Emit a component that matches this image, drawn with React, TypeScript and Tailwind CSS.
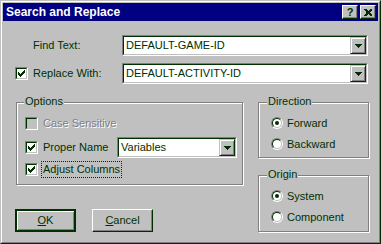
import React from 'react'

const ink = 'text-[#003000]'

const Check = ({ checked = false, disabled = false }: { checked?: boolean; disabled?: boolean }) => (
  <div className="w-[13px] h-[13px] shrink-0 border border-t-[#808080] border-l-[#808080] border-r-white border-b-white">
    <div
      className={`w-full h-full flex items-center justify-center border border-t-[#003000] border-l-[#003000] border-r-[#c0c0c0] border-b-[#c0c0c0] ${
        disabled ? 'bg-[#c0c0c0]' : 'bg-white'
      }`}
    >
      {checked && (
        <svg width="7" height="7" viewBox="0 0 7 7" shapeRendering="crispEdges" fill="#003000">
          <rect x="6" y="0" width="1" height="1" />
          <rect x="5" y="1" width="2" height="1" />
          <rect x="0" y="2" width="1" height="1" />
          <rect x="4" y="2" width="3" height="1" />
          <rect x="0" y="3" width="2" height="1" />
          <rect x="3" y="3" width="3" height="1" />
          <rect x="0" y="4" width="5" height="1" />
          <rect x="1" y="5" width="3" height="1" />
          <rect x="2" y="6" width="1" height="1" />
        </svg>
      )}
    </div>
  </div>
)

const Radio = ({ checked = false }: { checked?: boolean }) => (
  <div className="w-[12px] h-[12px] shrink-0 rounded-full border border-t-[#808080] border-l-[#808080] border-r-white border-b-white">
    <div className="w-full h-full rounded-full bg-white flex items-center justify-center border border-t-[#003000] border-l-[#003000] border-r-[#c0c0c0] border-b-[#c0c0c0]">
      {checked && <div className="w-[4px] h-[4px] rounded-full bg-[#003000]" />}
    </div>
  </div>
)

const Arrow = () => (
  <svg width="7" height="4" viewBox="0 0 7 4" shapeRendering="crispEdges" fill="#003000">
    <rect x="0" y="0" width="7" height="1" />
    <rect x="1" y="1" width="5" height="1" />
    <rect x="2" y="2" width="3" height="1" />
    <rect x="3" y="3" width="1" height="1" />
  </svg>
)

const Combo = ({ value, width }: { value: string; width: string }) => (
  <div className={`${width} h-[21px] shrink-0 border border-t-[#808080] border-l-[#808080] border-r-white border-b-white`}>
    <div className="h-full flex bg-white border border-t-[#003000] border-l-[#003000] border-r-[#c0c0c0] border-b-[#c0c0c0]">
      <div className={`flex-1 pl-[2px] leading-[17px] ${ink}`}>{value}</div>
      <div className="w-[16px] h-full flex items-center justify-center bg-[#c0c0c0] border border-t-[#c0c0c0] border-l-[#c0c0c0] border-r-[#003000] border-b-[#003000] shadow-[inset_1px_1px_white,inset_-1px_-1px_#808080]">
        <Arrow />
      </div>
    </div>
  </div>
)

const Group = ({ label, labelLeft, className, children }: { label: string; labelLeft: string; className: string; children: React.ReactNode }) => (
  <div className={`relative border border-[#808080] shadow-[inset_1px_1px_white,1px_1px_white] ${className}`}>
    <span className={`absolute top-[-8px] ${labelLeft} px-[1px] bg-[#c0c0c0] leading-[13px] ${ink}`}>{label}</span>
    {children}
  </div>
)

const Button = ({ children, isDefault = false }: { children: React.ReactNode; isDefault?: boolean }) => (
  <div
    className={`w-[61px] h-[23px] flex items-center justify-center ${ink} ${
      isDefault
        ? 'border-2 border-[#003000] shadow-[inset_1px_1px_white,inset_-1px_-1px_#808080]'
        : 'border border-t-white border-l-white border-r-[#003000] border-b-[#003000] shadow-[inset_-1px_-1px_#808080]'
    }`}
  >
    {children}
  </div>
)

export default function App() {
  return (
    <div className="w-[381px] h-[244px] bg-[#c0c0c0] text-[11px] font-['Liberation_Sans',Arial,sans-serif] border border-t-[#c0c0c0] border-l-[#c0c0c0] border-r-[#003000] border-b-[#003000]">
      <div className="h-full flex flex-col p-[1px] border border-t-white border-l-white border-r-[#808080] border-b-[#808080]">
        {/* title bar */}
        <div className="h-[18px] shrink-0 bg-[#000080] flex items-center pl-[3px] pr-[2px]">
          <span className="flex-1 text-white font-bold text-[12px] leading-none">Search and Replace</span>
          <div className="flex gap-[2px]">
            <div className="w-[16px] h-[14px] bg-[#c0c0c0] flex items-center justify-center border border-t-white border-l-white border-r-[#003000] border-b-[#003000] shadow-[inset_-1px_-1px_#808080]">
              <span className={`font-bold text-[11px] leading-none ${ink}`}>?</span>
            </div>
            <div className="w-[16px] h-[14px] bg-[#c0c0c0] flex items-center justify-center border border-t-white border-l-white border-r-[#003000] border-b-[#003000] shadow-[inset_-1px_-1px_#808080]">
              <svg width="8" height="7" viewBox="0 0 8 7" shapeRendering="crispEdges" fill="#003000">
                <path d="M0 0h2l2 2l2-2h2v1l-2 2v1l2 2v1h-2l-2-2l-2 2h-2v-1l2-2v-1l-2-2z" />
              </svg>
            </div>
          </div>
        </div>

        {/* body */}
        <div className="flex-1 pl-[12px]">
          <div className="mt-[14px] flex items-center">
            <div className="w-[13px]" />
            <span className={`ml-[5px] w-[89px] ${ink}`}>Find Text:</span>
            <Combo value="DEFAULT-GAME-ID" width="w-[246px]" />
          </div>
          <div className="mt-[7px] flex items-center">
            <Check checked />
            <span className={`ml-[5px] w-[89px] ${ink}`}>Replace With:</span>
            <Combo value="DEFAULT-ACTIVITY-ID" width="w-[246px]" />
          </div>

          <div className="mt-[18px] flex">
            <div className="ml-[1px]">
              <Group label="Options" labelLeft="left-[7px]" className="w-[227px] h-[83px] pl-[8px]">
                <div className="mt-[14px] h-[13px] flex items-center">
                  <Check disabled />
                  <span className="ml-[5px] text-[#808080] [text-shadow:1px_1px_0_white]">Case Sensitive</span>
                </div>
                <div className="mt-[7px] h-[21px] flex items-center">
                  <Check checked />
                  <span className={`ml-[5px] w-[74px] ${ink}`}>Proper Name</span>
                  <Combo value="Variables" width="w-[120px]" />
                </div>
                <div className="mt-[3px] h-[17px] flex items-center">
                  <Check checked />
                  <span className={`ml-[3px] px-[1px] h-[17px] leading-[15px] border border-dotted border-[#003000] ${ink}`}>Adjust Columns</span>
                </div>
              </Group>
              <div className="mt-[24px] flex gap-[16px] ml-[-1px]">
                <Button isDefault>
                  <span><span className="underline">O</span>K</span>
                </Button>
                <Button>
                  <span><span className="underline">C</span>ancel</span>
                </Button>
              </div>
            </div>

            <div className="ml-[15px]">
              <Group label="Direction" labelLeft="left-[8px]" className="w-[111px] h-[56px] pl-[12px]">
                <div className="mt-[14px] h-[12px] flex items-center">
                  <Radio checked />
                  <span className={`ml-[4px] ${ink}`}>Forward</span>
                </div>
                <div className="mt-[9px] h-[12px] flex items-center">
                  <Radio />
                  <span className={`ml-[4px] ${ink}`}>Backward</span>
                </div>
              </Group>
              <Group label="Origin" labelLeft="left-[8px]" className="mt-[17px] w-[111px] h-[57px] pl-[12px]">
                <div className="mt-[14px] h-[12px] flex items-center">
                  <Radio checked />
                  <span className={`ml-[4px] ${ink}`}>System</span>
                </div>
                <div className="mt-[9px] h-[12px] flex items-center">
                  <Radio />
                  <span className={`ml-[4px] ${ink}`}>Component</span>
                </div>
              </Group>
            </div>
          </div>
        </div>
      </div>
    </div>
  )
}
